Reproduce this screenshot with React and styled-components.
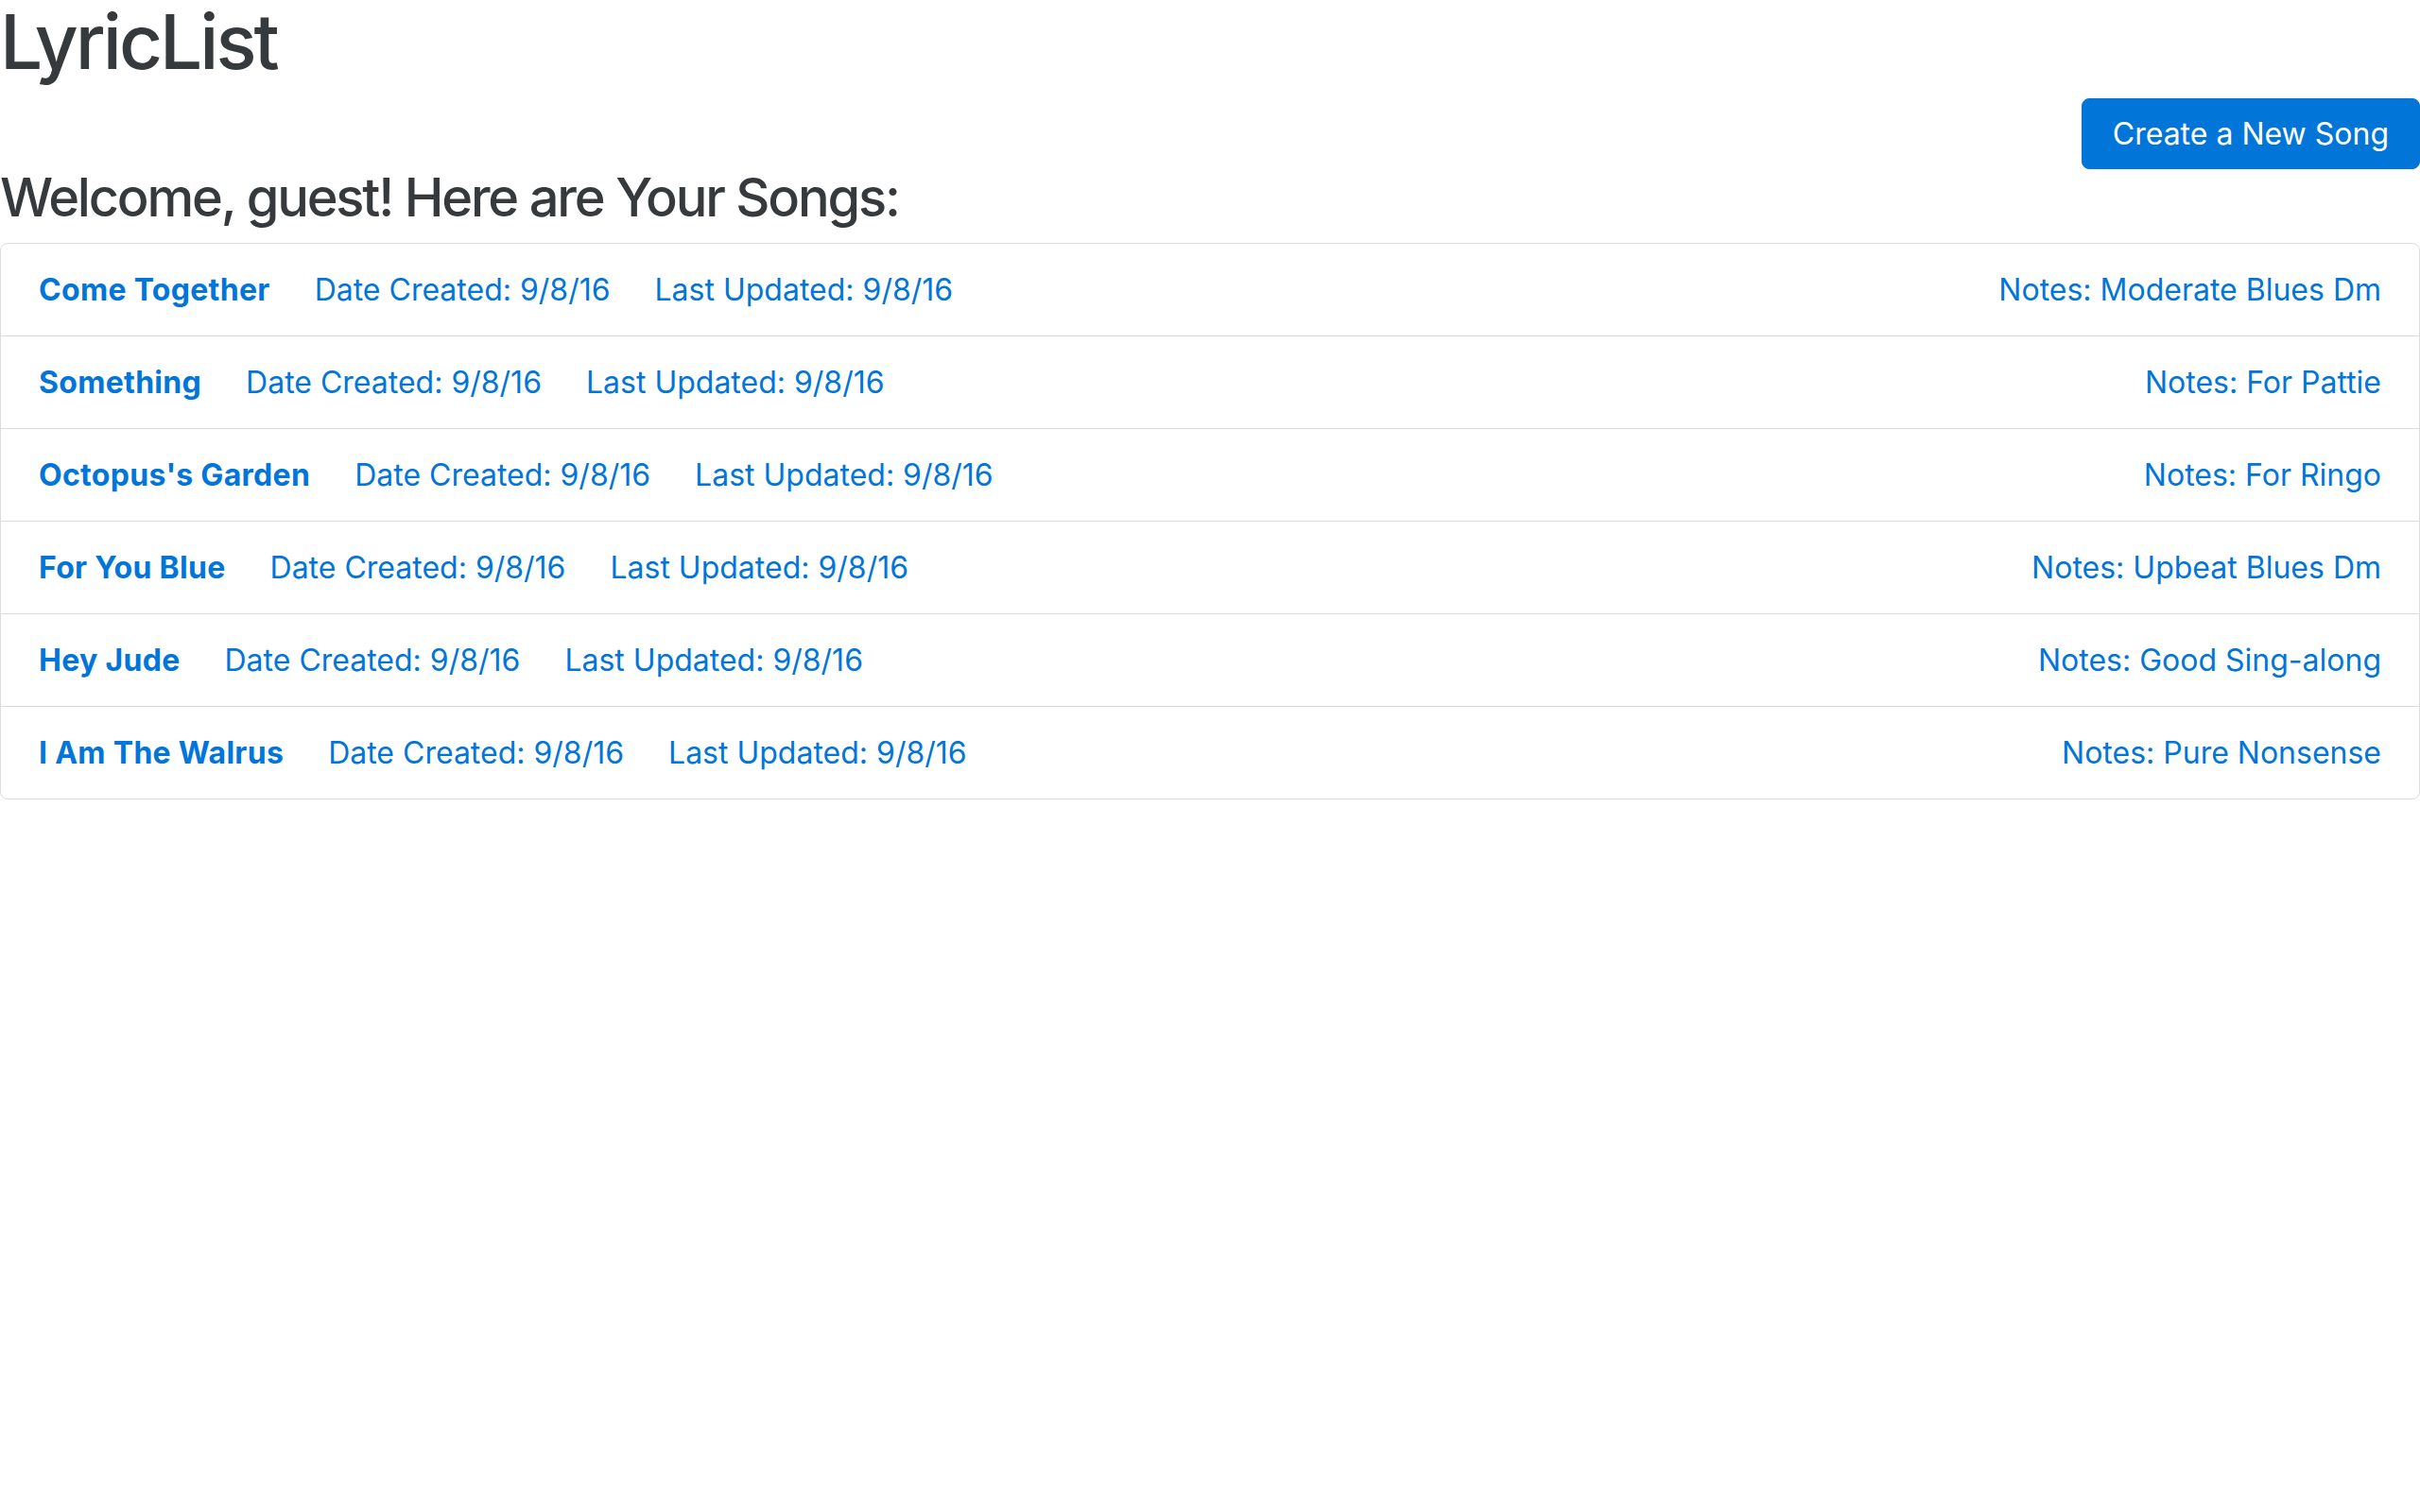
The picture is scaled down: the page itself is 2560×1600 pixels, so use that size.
import React from 'react';
import styled, { createGlobalStyle } from 'styled-components';

const GlobalStyle = createGlobalStyle`
  body {
    margin: 0;
    background: #fff;
    font-family: Inter, "Liberation Sans", sans-serif;
    font-size: 32px;
    line-height: 1.5;
    color: #373a3c;
  }
`;

const songs = [
  { id: 1, title: 'Come Together', created: '9/8/16', updated: '9/8/16', notes: 'Moderate Blues Dm' },
  { id: 2, title: 'Something', created: '9/8/16', updated: '9/8/16', notes: 'For Pattie' },
  { id: 3, title: "Octopus's Garden", created: '9/8/16', updated: '9/8/16', notes: 'For Ringo' },
  { id: 4, title: 'For You Blue', created: '9/8/16', updated: '9/8/16', notes: 'Upbeat Blues Dm' },
  { id: 5, title: 'Hey Jude', created: '9/8/16', updated: '9/8/16', notes: 'Good Sing-along' },
  { id: 6, title: 'I Am The Walrus', created: '9/8/16', updated: '9/8/16', notes: 'Pure Nonsense' },
];

const Page = styled.div`
  display: flex;
  flex-direction: column;
`;

const Title = styled.h1`
  margin: 0 0 16px;
  font-size: 80px;
  font-weight: 500;
  line-height: 1.1;
  letter-spacing: -3px;
`;

const Toolbar = styled.div`
  display: flex;
  justify-content: flex-end;
`;

const Button = styled.button`
  font-family: inherit;
  font-size: 32px;
  line-height: 48px;
  padding: 13px 32px 12px;
  color: #fff;
  background: #0275d8;
  border: 1px solid #0275d8;
  border-radius: 8px;
  cursor: pointer;
`;

const Heading = styled.h3`
  margin: 0 0 16px;
  font-size: 56px;
  font-weight: 500;
  line-height: 1.1;
  letter-spacing: -2.2px;
`;

const List = styled.ul`
  list-style: none;
  margin: 0;
  padding: 0;
  border: 1px solid #dcdcdc;
  border-radius: 8px;
`;

const Row = styled.li`
  display: flex;
  align-items: center;
  gap: 47px;
  padding: 25px 40px 24px;
  line-height: 48px;
  color: #0275d8;
  & + & {
    border-top: 1px solid #dcdcdc;
  }
`;

const SongTitle = styled.span`
  font-weight: 700;
  letter-spacing: 0.3px;
`;

const Notes = styled.span`
  margin-left: auto;
`;

export default function App() {
  return (
    <Page>
      <GlobalStyle />
      <Title>LyricList</Title>
      <Toolbar>
        <Button>Create a New Song</Button>
      </Toolbar>
      <Heading>Welcome, guest! Here are Your Songs:</Heading>
      <List>
        {songs.map(song => (
          <Row key={song.id}>
            <SongTitle>{song.title}</SongTitle>
            <span>Date Created: {song.created}</span>
            <span>Last Updated: {song.updated}</span>
            <Notes>Notes: {song.notes}</Notes>
          </Row>
        ))}
      </List>
    </Page>
  );
}
